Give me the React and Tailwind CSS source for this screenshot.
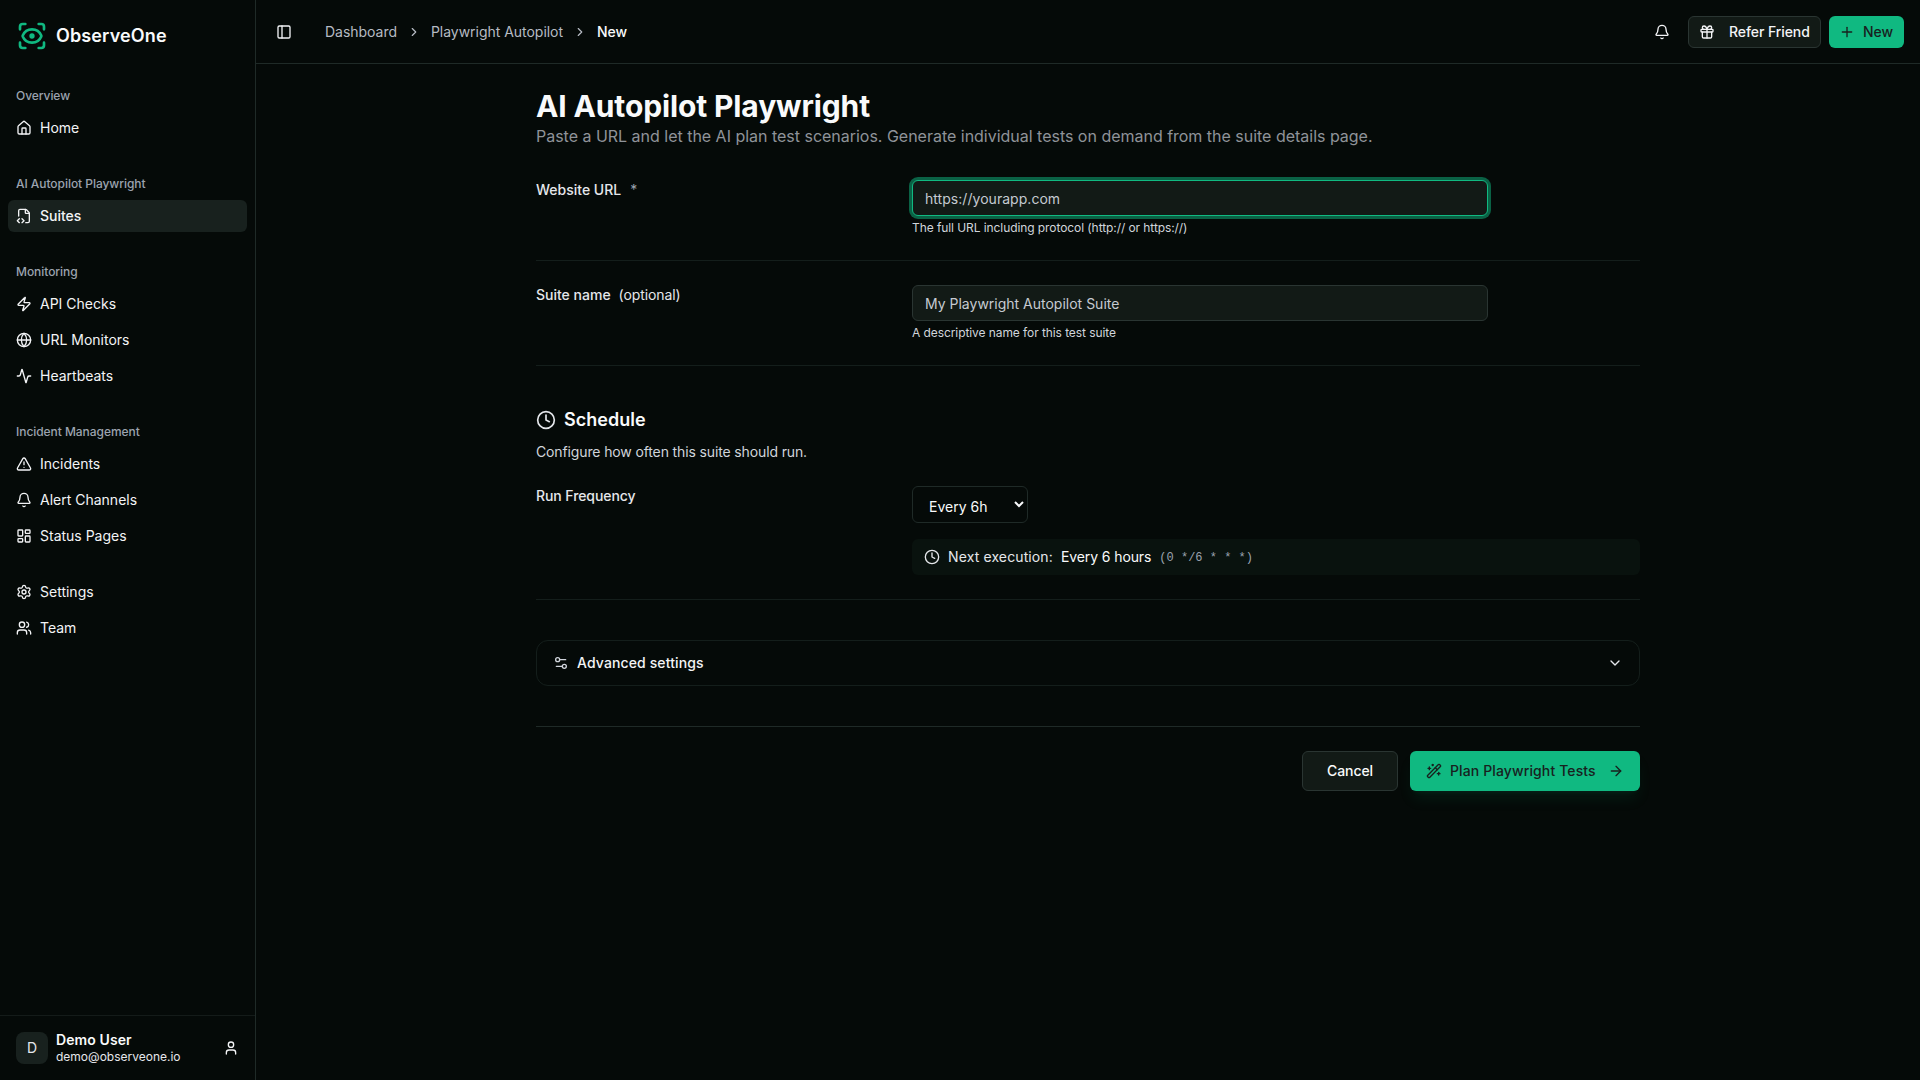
import React, { useState } from 'react';
import {
  Activity,
  ArrowRight,
  Bell,
  ChevronDown,
  ChevronRight,
  Clock,
  FileCode2,
  Gift,
  Globe,
  House,
  LayoutDashboard,
  PanelLeft,
  Plus,
  ScanEye,
  Settings,
  Settings2,
  TriangleAlert,
  User,
  Users,
  WandSparkles,
  Zap,
} from 'lucide-react';

const navGroups = [
  { label: 'Overview', items: [{ label: 'Home', icon: House }] },
  { label: 'AI Autopilot Playwright', items: [{ label: 'Suites', icon: FileCode2 }] },
  {
    label: 'Monitoring',
    items: [
      { label: 'API Checks', icon: Zap },
      { label: 'URL Monitors', icon: Globe },
      { label: 'Heartbeats', icon: Activity },
    ],
  },
  {
    label: 'Incident Management',
    items: [
      { label: 'Incidents', icon: TriangleAlert },
      { label: 'Alert Channels', icon: Bell },
      { label: 'Status Pages', icon: LayoutDashboard },
    ],
  },
  {
    items: [
      { label: 'Settings', icon: Settings },
      { label: 'Team', icon: Users },
    ],
  },
];

function Sidebar({ active, onSelect }) {
  return (
    <aside className="flex w-64 shrink-0 flex-col border-r border-[#1f2a27]">
      <div className="flex h-[72px] items-center gap-2 px-4">
        <ScanEye className="size-8 text-[#10b981]" />
        <span className="text-lg font-semibold tracking-[0.13px] text-gray-50">ObserveOne</span>
      </div>

      <nav className="flex flex-1 flex-col gap-2">
        {navGroups.map((group, i) => (
          <div key={i} className="p-2">
            {group.label && (
              <div className="flex h-8 items-center px-2 text-xs font-medium tracking-[-0.05px] text-[#9ca3af]">
                {group.label}
              </div>
            )}
            <ul className="flex flex-col gap-1">
              {group.items.map(({ label, icon: Icon }) => (
                <li key={label}>
                  <button
                    onClick={() => onSelect(label)}
                    className={`${
                      active === label ? 'bg-[#18211e] font-medium' : ''
                    } flex h-8 w-full items-center gap-2 rounded-md px-2 text-sm text-[#f3f4f6]`}
                  >
                    <Icon className="size-4" />
                    {label}
                  </button>
                </li>
              ))}
            </ul>
          </div>
        ))}
      </nav>

      <div className="flex items-center gap-2 border-t border-[#141b19] p-4">
        <div className="flex size-8 items-center justify-center rounded-lg bg-[#18211e] text-sm text-gray-200">D</div>
        <div className="flex h-8 flex-1 flex-col">
          <span className="text-sm leading-4 font-semibold tracking-[0.1px] text-gray-50">Demo User</span>
          <span className="pt-px text-xs leading-4 text-gray-200">demo@observeone.io</span>
        </div>
        <User className="size-4 text-gray-100" />
      </div>
    </aside>
  );
}

function Header() {
  return (
    <header className="flex h-16 shrink-0 items-center justify-between border-b border-[#1f2a27] pr-4 pl-3.5">
      <div className="flex items-center">
        <button className="flex size-7 items-center justify-center text-gray-100">
          <PanelLeft className="size-4" />
        </button>
        <ol className="ml-[27px] flex items-center gap-2.5 text-sm tracking-[-0.03px] text-[#b6bbc3]">
          <li>Dashboard</li>
          <ChevronRight className="size-3.5" />
          <li>Playwright Autopilot</li>
          <ChevronRight className="size-3.5" />
          <li className="font-medium text-gray-50">New</li>
        </ol>
      </div>

      <div className="flex items-center gap-2">
        <button className="mr-2.5 text-gray-100">
          <Bell className="size-4" />
        </button>
        <button className="flex h-8 w-[133px] items-center gap-3.5 rounded-md border border-[#2a3532] bg-[#121a16] px-2.5 text-sm font-medium tracking-[-0.08px] whitespace-nowrap text-gray-100">
          <Gift className="size-4 shrink-0" />
          Refer Friend
        </button>
        <button className="flex h-8 w-[75px] items-center gap-2 rounded-md bg-[#10b981] px-2.5 text-sm font-medium text-[#18211e]">
          <Plus className="size-4" />
          New
        </button>
      </div>
    </header>
  );
}

function Field({ label, hint, help, children }) {
  return (
    <div className="grid grid-cols-3 gap-6 border-b border-[#141e1b] py-6">
      <label className="text-sm text-gray-200">
        <span className="font-medium">{label}</span>
        {hint}
      </label>
      <div className="col-span-2">
        {children}
        <p className="mt-1 text-xs tracking-[-0.08px] text-[#d1d5db]">{help}</p>
      </div>
    </div>
  );
}

export default function App() {
  const [active, setActive] = useState('Suites');
  const [url, setUrl] = useState('');
  const [name, setName] = useState('');
  const [frequency, setFrequency] = useState('6h');

  return (
    <div className="flex h-screen overflow-hidden bg-[#050a08] font-['Inter',sans-serif] text-gray-100">
      <Sidebar active={active} onSelect={setActive} />

      <div className="flex flex-1 flex-col">
        <Header />

        <main className="mx-auto w-[1104px] pt-6">
          <h1 className="text-3xl leading-9 font-bold tracking-[-0.13px] text-gray-50">AI Autopilot Playwright</h1>
          <p className="text-base tracking-[-0.015px] text-[#8f9399]">
            Paste a URL and let the AI plan test scenarios. Generate individual tests on demand from the suite details
            page.
          </p>

          <div className="mt-2">
            <Field
              label="Website URL"
              hint={<span className="ml-[9px] text-[#9ca3af]">*</span>}
              help="The full URL including protocol (http:// or https://)"
            >
              <input
                value={url}
                onChange={(e) => setUrl(e.target.value)}
                placeholder="https://yourapp.com"
                className="block h-9 w-full max-w-xl rounded-md border border-[#10b981] bg-[#121a16] px-3 text-sm tracking-[0.04px] ring-3 ring-[#10b981]/50 outline-none placeholder:text-[#c5cad1]"
              />
            </Field>
            <Field
              label="Suite name"
              hint={<span className="ml-2 tracking-[-0.1px]">(optional)</span>}
              help="A descriptive name for this test suite"
            >
              <input
                value={name}
                onChange={(e) => setName(e.target.value)}
                placeholder="My Playwright Autopilot Suite"
                className="block h-9 w-full max-w-xl rounded-md border border-[#2a3532] bg-[#121a16] px-3 text-sm outline-none placeholder:text-[#c5cad1]"
              />
            </Field>
          </div>

          {/* Schedule */}
          <section className="border-b border-[#141e1b] pt-10 pb-6">
            <h2 className="flex items-center gap-2 text-lg font-semibold tracking-[0.04px] text-gray-50">
              <Clock className="size-5 text-gray-200" />
              Schedule
            </h2>
            <p className="mt-2 text-sm tracking-[-0.13px] text-[#d1d5db]">Configure how often this suite should run.</p>
            <div className="mt-6 grid grid-cols-3 gap-6">
              <label className="text-sm font-medium tracking-[-0.08px] text-gray-200">Run Frequency</label>
              <div className="col-span-2">
                <select
                  value={frequency}
                  onChange={(e) => setFrequency(e.target.value)}
                  className="block h-[37px] w-[116px] rounded-md border border-[#1f2a27] bg-[#050a08] px-3 pt-[9px] pb-1.5 text-sm text-gray-50"
                >
                  <option value="6h">Every 6h</option>
                </select>
                <div className="mt-4 flex h-9 items-center gap-2 rounded-md bg-[#09120e] px-3 text-sm text-gray-200">
                  <Clock className="size-4" />
                  <span className="tracking-[0.12px]">Next execution:</span>
                  <span className="tracking-[-0.1px] text-gray-50">Every 6 hours</span>
                  <span className="pt-0.5 font-['Liberation_Mono',monospace] text-xs text-[#9ca3af]">
                    (0 */6 * * *)
                  </span>
                </div>
              </div>
            </div>
          </section>

          <button className="mt-10 flex w-full items-center gap-2 rounded-xl border border-[#141e1b] px-4 py-3 text-sm font-medium tracking-[0.12px] text-gray-100">
            <Settings2 className="size-4 text-gray-300" />
            Advanced settings
            <ChevronDown className="ml-auto size-4 text-gray-200" />
          </button>

          <div className="mt-10 flex justify-end gap-3 border-t border-[#1f2a27] pt-6">
            <button className="h-10 w-24 rounded-md border border-[#2a3532] bg-[#121a16] text-sm font-medium tracking-[-0.08px] text-gray-50">
              Cancel
            </button>
            <button className="flex h-10 w-[230px] items-center gap-2 rounded-md bg-[#10b981] px-4 text-sm font-medium tracking-[0.12px] text-[#18211e] shadow-lg shadow-[#10b981]/10">
              <WandSparkles className="size-4" />
              Plan Playwright Tests
              <ArrowRight className="ml-auto size-4" />
            </button>
          </div>
        </main>
      </div>
    </div>
  );
}
